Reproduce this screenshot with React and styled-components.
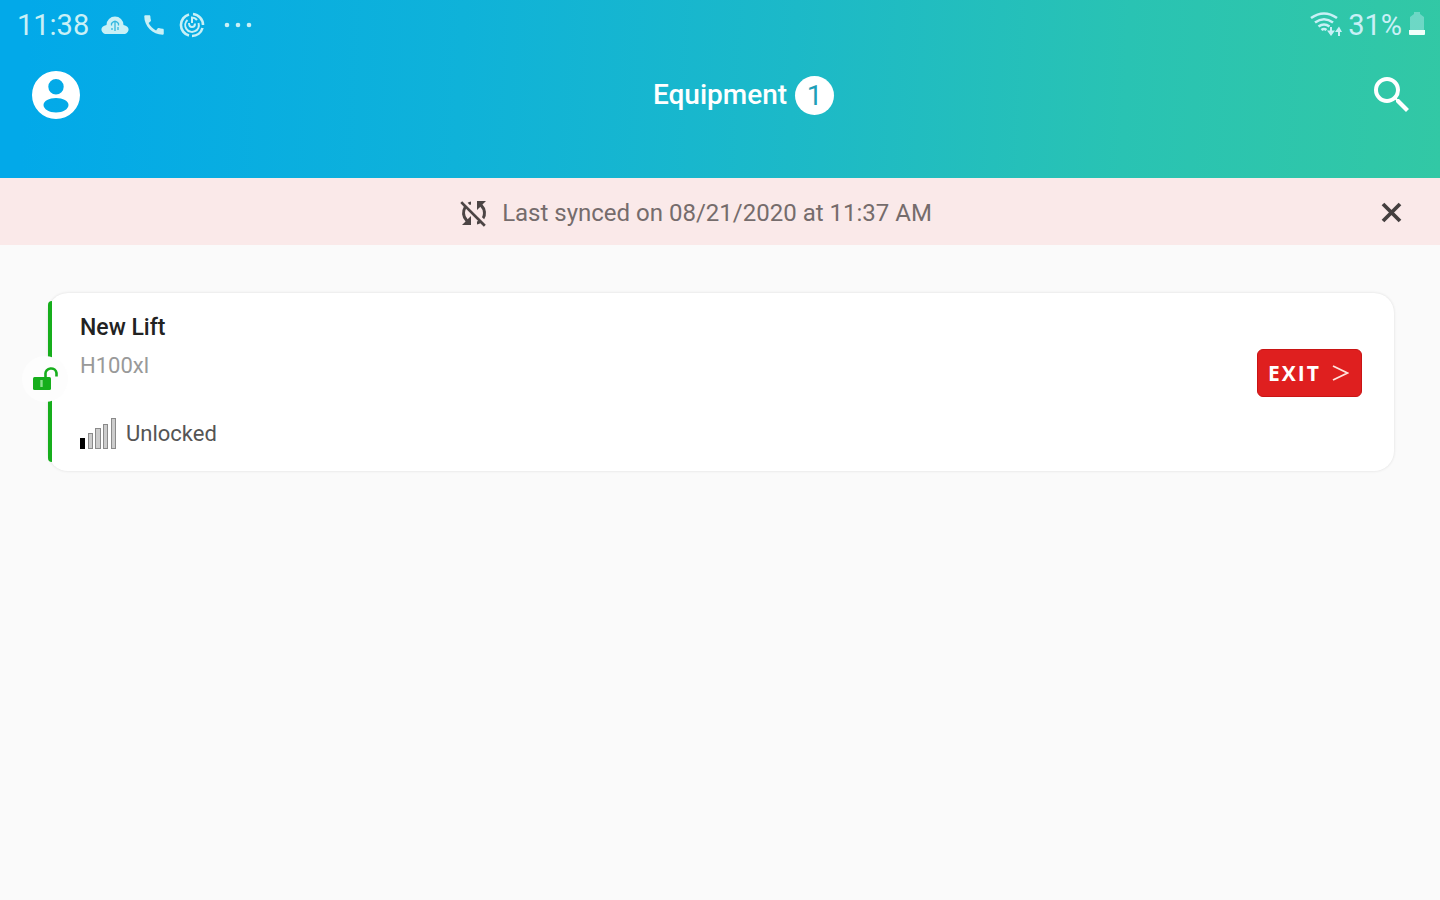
import styled, { createGlobalStyle } from "styled-components"
import { MdCall, MdSearch, MdSyncDisabled } from "react-icons/md"

const GlobalStyle = createGlobalStyle`
    * {
        box-sizing: border-box;
    }

    body {
        background: #fafafa;
        font-family: Roboto, sans-serif;
        margin: 0;
    }
`

const Header = styled.header`
    background: linear-gradient(93deg, #02a9e9 2%, #0fb2d9 32%, #1cb9c8 55%, #29c3b3 78%, #32c8a5 100%);
    color: #fff;
    padding-bottom: 36px;
`

const StatusBar = styled.div`
    align-items: center;
    color: #c9f0f6;
    display: flex;
    font-size: 29px;
    height: 48px;
    justify-content: space-between;
    line-height: 48px;
    padding: 2px 14px 0 17px;
`

const StatusGroup = styled.div`
    align-items: center;
    display: flex;
    gap: ${props => props.$gap};

    svg {
        display: block;
    }
`

const Toolbar = styled.div`
    align-items: center;
    display: grid;
    grid-template-columns: 1fr auto 1fr;
    height: 94px;
    padding: 0 24px;
`

const ToolbarEnd = styled.div`
    align-items: center;
    display: flex;
    justify-content: space-between;
    padding-left: 8px;
`

const IconButton = styled.button`
    background: none;
    border: none;
    color: ${props => props.$color || "#fff"};
    display: flex;
    justify-self: start;
    padding: ${props => props.$padding || "0"};
`

const Title = styled.h1`
    font-size: 28px;
    font-weight: 500;
    line-height: 40px;
    margin: 0;
`

const Count = styled.span`
    background: #fff;
    border-radius: 50%;
    color: #1e9fb8;
    font-size: 28px;
    height: 39px;
    line-height: 39px;
    text-align: center;
    width: 39px;
`

const SyncBanner = styled.section`
    align-items: center;
    background: #fae9e9;
    color: #756c6c;
    display: flex;
    height: 67px;
    padding: 2px 32px 0 12px;
`

const SyncMessage = styled.p`
    align-items: center;
    display: flex;
    flex: 1;
    font-size: 24px;
    gap: 10px;
    justify-content: center;
    line-height: 32px;
    margin: 0;

    svg {
        color: #4c4545;
    }
`

const Main = styled.main`
    padding: 48px 46px 48px 48px;
`

const Card = styled.article`
    align-items: center;
    background: #fff;
    border-radius: 20px;
    box-shadow: 0 0 3px rgba(0, 0, 0, 0.12);
    display: flex;
    justify-content: space-between;
    padding: 17px 32px 21px;
    position: relative;

    &::before {
        background: #16ae1c;
        border-radius: 4px 0 0 4px;
        bottom: 9px;
        content: "";
        left: 0;
        position: absolute;
        top: 8px;
        width: 4px;
    }
`

const LockBadge = styled.span`
    align-items: center;
    background: #fdfdfd;
    border-radius: 50%;
    display: flex;
    height: 46px;
    justify-content: center;
    left: -26px;
    position: absolute;
    top: 63px;
    width: 46px;
`

const Name = styled.h2`
    color: #222;
    font-size: 23px;
    font-weight: 500;
    line-height: 36px;
    margin: 0;
`

const Model = styled.p`
    color: #999;
    font-size: 22px;
    font-weight: 400;
    line-height: 40px;
    margin: 0 0 32px;
`

const Status = styled.p`
    align-items: center;
    color: #555;
    display: flex;
    font-size: 22px;
    gap: 9px;
    line-height: 32px;
    margin: 0;
`

const ExitButton = styled.button`
    align-items: center;
    background: #df1f1f;
    border: 1px solid #c91414;
    border-radius: 6px;
    color: #fff;
    display: flex;
    font-family: "Open Sans", sans-serif;
    font-size: 21px;
    font-weight: 700;
    height: 48px;
    justify-content: space-between;
    letter-spacing: 2px;
    margin-bottom: 14px;
    padding: 0 12px 0 10px;
    width: 105px;
`

const CloudIcon = () => (
    <svg width="28" height="20" viewBox="0 0 28 20" aria-hidden="true">
        <path d="M4 19C-1 17-1 11 5.500 10A8.500 8.500 0 0 1 22.500 10C29 11 29 17 24 19z" fill="currentColor" />
        <path d="M14 16V7M10.500 10.500V8.500Q14 4 17.500 8.500V10.500M11 13V15M17 12V15" stroke="#35b8df" strokeWidth="1.300" fill="none" />
    </svg>
)

const SwirlIcon = () => (
    <svg width="26" height="26" viewBox="0 0 26 26" fill="none" stroke="currentColor" aria-hidden="true">
        <path d="M10 2.400A11 11 0 0 0 10 23.600M13 24A11 11 0 0 0 23.500 16M24 13A11 11 0 0 0 14 2" strokeWidth="2.600" />
        <path d="M8.500 8A6.800 6.800 0 1 0 19.500 11M12 5.500A7 7 0 0 1 18 8" strokeWidth="2" />
        <path d="M10 11Q10 15 13 15Q16 15 16 11.500M13 6V11" strokeWidth="2" />
    </svg>
)

const DotsIcon = () => (
    <svg width="28" height="6" viewBox="0 0 28 6" fill="currentColor" aria-hidden="true">
        <circle cx="3" cy="3" r="2.300" />
        <circle cx="14" cy="3" r="2.300" />
        <circle cx="25" cy="3" r="2.300" />
    </svg>
)

const WifiIcon = () => (
    <svg width="32" height="26" viewBox="0 0 32 26" fill="none" stroke="currentColor" strokeWidth="2.600" aria-hidden="true">
        <path d="M1 6Q14-3 27 6M5 10.500Q14 4 23 10.500M8.500 14.500Q14 10.500 19.500 14.500M11.500 18Q14 16 16.500 18" />
        <path d="M21 15V21M29 24V17" strokeWidth="2" />
        <path d="M17 18.500H25L21 24zM25 20L29 14.500L32 20z" fill="currentColor" stroke="none" />
    </svg>
)

const BatteryIcon = () => (
    <svg width="18" height="26" viewBox="0 0 18 26" fill="currentColor" aria-hidden="true">
        <path d="M6 0H12V2L16 5V18H2V5L6 2z" opacity=".4" />
        <path d="M1 18H17V22Q17 23 16 23H2Q1 23 1 22z" fill="#f0fffa" />
    </svg>
)

const AccountIcon = () => (
    <svg width="48" height="48" viewBox="0 0 48 48" aria-hidden="true">
        <path
            fill="currentColor"
            fillRule="evenodd"
            d="M24 0a24 24 0 1 1 0 48a24 24 0 1 1 0-48zM24 8a7.700 7.700 0 1 0 0 15.400a7.700 7.700 0 1 0 0-15.400zM24 27C17 27 11.500 30 11.500 34C11.500 38 17 41.500 24 41.500S36.500 38 36.500 34C36.500 30 31 27 24 27z"
        />
    </svg>
)

const CloseIcon = () => (
    <svg width="32" height="32" viewBox="0 0 32 32" fill="none" stroke="currentColor" strokeWidth="3.800" aria-hidden="true">
        <path d="M7 7L24 24M24 7L7 24" />
    </svg>
)

const UnlockIcon = () => (
    <svg width="26" height="24" viewBox="0 0 26 24" aria-hidden="true">
        <rect x="1" y="10" width="18" height="13" rx="1.500" fill="#16ae1c" />
        <path d="M13.500 10V7A5.500 5 0 0 1 24.500 6V9.500" fill="none" stroke="#16ae1c" strokeWidth="2.600" />
        <path d="M9.500 13V20" stroke="#8be08e" strokeWidth="2.400" />
    </svg>
)

const SignalIcon = () => (
    <svg width="37" height="32" viewBox="0 0 37 32" aria-hidden="true">
        <rect x="0" y="20" width="5" height="11" fill="#000" />
        <g fill="#ccc" stroke="#8a8a8a">
            <rect x="8.500" y="15.500" width="4" height="15" />
            <rect x="15.500" y="10.500" width="5" height="20" />
            <rect x="23.500" y="6.500" width="4" height="24" />
            <rect x="31.500" y="0.500" width="4" height="30" />
        </g>
    </svg>
)

const ChevronIcon = () => (
    <svg width="17" height="16" viewBox="0 0 17 16" fill="none" stroke="#ffe3dc" strokeWidth="1.900" aria-hidden="true">
        <path d="M1 1L15.500 8L1 15" />
    </svg>
)

const App = () => {
    return (
        <>
            <GlobalStyle />
            <Header>
                <StatusBar>
                    <StatusGroup $gap="12px">
                        <span>11:38</span>
                        <CloudIcon />
                        <MdCall size={26} />
                        <SwirlIcon />
                        <StatusGroup $gap="0">
                            <span>&nbsp;</span>
                            <DotsIcon />
                        </StatusGroup>
                    </StatusGroup>
                    <StatusGroup $gap="6px">
                        <WifiIcon />
                        <span>31%</span>
                        <BatteryIcon />
                    </StatusGroup>
                </StatusBar>
                <Toolbar>
                    <IconButton aria-label="Account" $padding="0 0 0 8px">
                        <AccountIcon />
                    </IconButton>
                    <Title>Equipment</Title>
                    <ToolbarEnd>
                        <Count>1</Count>
                        <IconButton aria-label="Search">
                            <MdSearch size={48} />
                        </IconButton>
                    </ToolbarEnd>
                </Toolbar>
            </Header>
            <SyncBanner>
                <SyncMessage>
                    <MdSyncDisabled size={36} />
                    Last synced on 08/21/2020 at 11:37 AM
                </SyncMessage>
                <IconButton aria-label="Dismiss" $color="#443f3f">
                    <CloseIcon />
                </IconButton>
            </SyncBanner>
            <Main>
                <Card>
                    <div>
                        <Name>New Lift</Name>
                        <Model>H100xl</Model>
                        <Status>
                            <SignalIcon />
                            Unlocked
                        </Status>
                    </div>
                    <ExitButton>
                        EXIT
                        <ChevronIcon />
                    </ExitButton>
                    <LockBadge>
                        <UnlockIcon />
                    </LockBadge>
                </Card>
            </Main>
        </>
    )
}

export default App
